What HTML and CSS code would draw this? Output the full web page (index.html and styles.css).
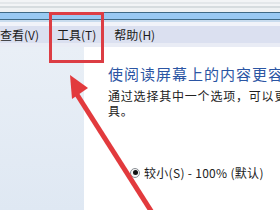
FILE: index.html
```html
<!DOCTYPE html>
<html>
<head>
<meta charset="utf-8">
<link rel="stylesheet" href="styles.css">
</head>
<body>
<div class="window">
  <div class="chrome">
    <div class="band b1"></div>
    <div class="band b2"></div>
    <div class="band b1"></div>
    <div class="band b3"></div>
    <div class="band b4"></div>
    <div class="band dark"></div>
    <div class="band blue"></div>
    <div class="band dark"></div>
    <div class="band b5"></div>
    <div class="band b6"></div>
  </div>
  <div class="menubar">
    <span class="item">查看(V)</span>
    <span class="item">工具(T)</span>
    <span class="item">帮助(H)</span>
  </div>
  <div class="main">
    <div class="sidebar"></div>
    <div class="content">
      <div class="title">使阅读屏幕上的内容更容易</div>
      <div class="desc">
        <div class="line">通过选择其中一个选项，可以更改屏幕上的文本和其他项目的大小。</div>
        <div class="line">具。</div>
      </div>
      <div class="option">
        <span class="radio"><span class="dot"></span></span>
        <span class="label">较小(S) - 100% (默认)</span>
      </div>
    </div>
  </div>
  <svg class="annot" width="280" height="210" viewBox="0 0 280 210">
    <rect x="50.5" y="13.5" width="52" height="48" fill="none" stroke="#dc3d44" stroke-width="3"/>
    <line x1="76" y1="93" x2="153" y2="214" stroke="#e23a3d" stroke-width="5"/>
    <polygon points="70,75 88,88 72,99" fill="#e23a3d"/>
  </svg>
</div>
</body>
</html>
```
FILE: styles.css
```css
html, body {
  margin: 0;
  padding: 0;
  background: #ffffff;
}
body {
  width: 280px;
  height: 210px;
  overflow: hidden;
  font-family: "Noto Sans CJK SC", "Noto Sans", sans-serif;
}
.window {
  position: relative;
  width: 280px;
  height: 210px;
  display: flex;
  flex-direction: column;
  overflow: hidden;
}
.chrome {
  display: flex;
  flex-direction: column;
}
.band { height: 2px; }
.b1 { background: #f2f4f6; }
.b2 { background: #e3e7ea; }
.b3 { background: #d6dcdf; }
.b4 { height: 4px; background: #eef1f3; }
.dark { height: 1px; background: #3f6a86; }
.blue { height: 6px; background: #99c9f3; }
.b5 { height: 2px; background: #c9dcee; }
.b6 { height: 4px; background: #f1f3f9; }
.menubar {
  height: 17px;
  background: #dbe0f0;
  display: flex;
  align-items: center;
  gap: 18px;
  font-size: 12px;
  color: #1b1b1b;
  border-bottom: 4px solid #e9ecf5;
}
.item {
  white-space: nowrap;
  line-height: 17px;
}
.main {
  flex: 1;
  display: flex;
}
.sidebar {
  width: 84px;
  background: linear-gradient(180deg, #e9eff6 0%, #dfe8f3 100%);
}
.content {
  flex: 1;
  padding: 17px 0 0 24px;
  overflow: hidden;
}
.title {
  font-size: 15px;
  line-height: 20px;
  letter-spacing: 1px;
  color: #2b55a3;
  white-space: nowrap;
}
.desc {
  margin-top: 4px;
  font-size: 12px;
  line-height: 15px;
  letter-spacing: 0.8px;
  color: #222;
}
.line { white-space: nowrap; }
.option {
  margin-top: 47px;
  margin-left: 22px;
  display: flex;
  align-items: center;
  gap: 4px;
  font-size: 12px;
  color: #222;
}
.radio {
  width: 8px;
  height: 8px;
  border: 1px solid #8a8f95;
  border-radius: 50%;
  background: #f4f4f4;
  display: flex;
  align-items: center;
  justify-content: center;
}
.dot {
  width: 5px;
  height: 5px;
  border-radius: 50%;
  background: #111;
}
.label {
  white-space: nowrap;
  line-height: 15px;
  letter-spacing: 0.3px;
}
.annot {
  position: absolute;
  left: 0;
  top: 0;
}
```
